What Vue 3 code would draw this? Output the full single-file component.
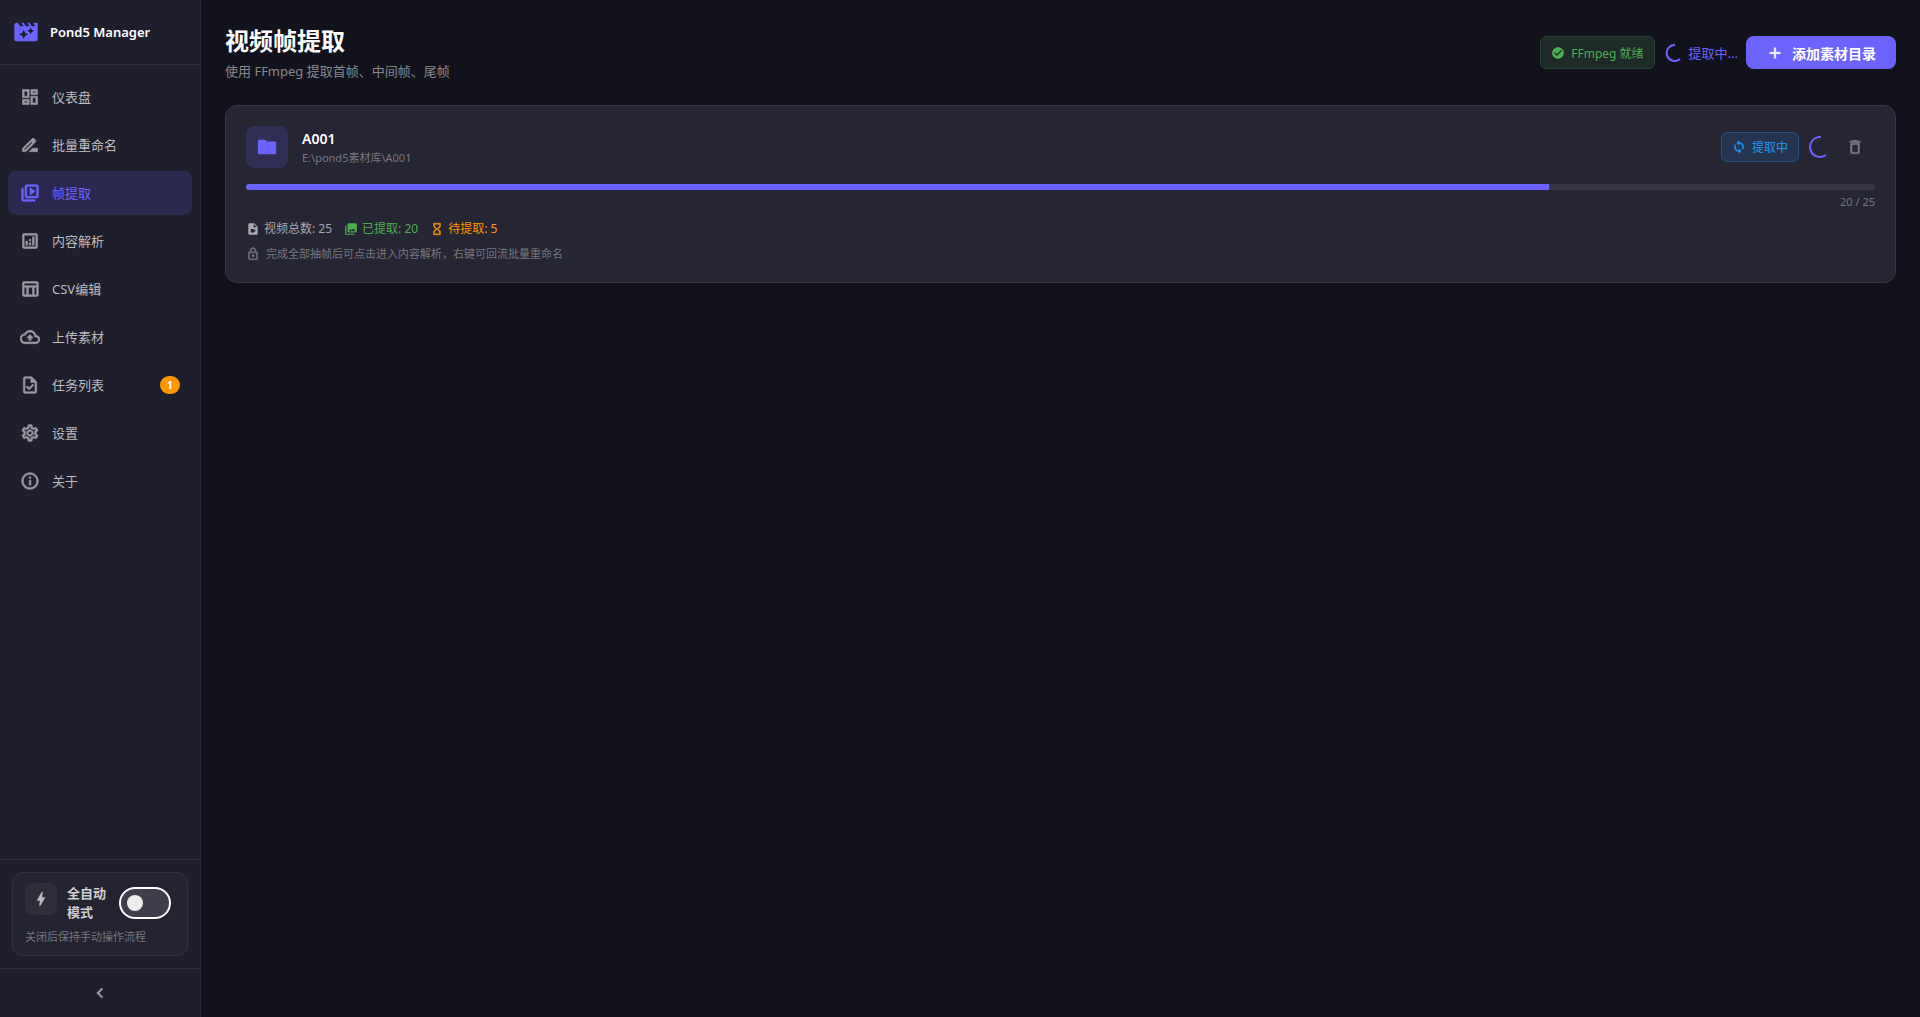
<script setup>
import { ref, computed } from 'vue'

const icons = {
  logo: 'M18 4l2 3h-3l-2-3h-2l2 3h-3l-2-3H8l2 3H7L5 4H4c-1.1 0-1.99.9-1.99 2L2 18c0 1.1.9 2 2 2h16c1.1 0 2-.9 2-2V4h-4zm-6.75 11.25L10 18l-1.25-2.75L6 14l2.75-1.25L10 10l1.25 2.75L14 14l-2.75 1.25zm5.69-3.31L16 14l-.94-2.06L13 11l2.06-.94L16 8l.94 2.06L19 11l-2.06.94z',
  bolt: 'M11 21h-1l1-7H7.5c-.58 0-.57-.32-.38-.66.19-.34.05-.08.07-.12C8.48 10.94 10.42 7.54 13 3h1l-1 7h3.5c.49 0 .56.33.47.51l-.07.15C12.96 17.55 11 21 11 21z',
  chevron: 'M15.41 7.41L14 6l-6 6 6 6 1.41-1.41L10.83 12z',
  check: 'M12 2C6.48 2 2 6.48 2 12s4.48 10 10 10 10-4.48 10-10S17.52 2 12 2zm-2 15l-5-5 1.41-1.41L10 14.17l7.59-7.59L19 8l-9 9z',
  add: 'M19 13h-6v6h-2v-6H5v-2h6V5h2v6h6v2z',
  sync: 'M12 4V1L8 5l4 4V6c3.31 0 6 2.69 6 6 0 1.01-.25 1.97-.7 2.8l1.46 1.46C19.54 15.03 20 13.57 20 12c0-4.42-3.58-8-8-8zm0 14c-3.31 0-6-2.69-6-6 0-1.01.25-1.97.7-2.8L5.24 7.74C4.46 8.97 4 10.43 4 12c0 4.42 3.58 8 8 8v3l4-4-4-4v3z',
  folder: 'M10 4H4c-1.1 0-1.99.9-1.99 2L2 18c0 1.1.9 2 2 2h16c1.1 0 2-.9 2-2V8c0-1.1-.9-2-2-2h-8l-2-2z',
  trash: 'M6 19c0 1.1.9 2 2 2h8c1.1 0 2-.9 2-2V7H6v12zM8 9h8v10H8V9zm7.5-5l-1-1h-5l-1 1H5v2h14V4z',
  video: 'M14 2H6.01c-1.1 0-2 .9-2 2L4 20c0 1.1.89 2 1.99 2H18c1.1 0 2-.9 2-2V8l-6-6zm-1 7V3.5L18.5 9H13zm1 5l2-1.06v4.12L14 16v1c0 .55-.45 1-1 1H9c-.55 0-1-.45-1-1v-4c0-.55.45-1 1-1h4c.55 0 1 .45 1 1v1z',
  photos: 'M22 16V4c0-1.1-.9-2-2-2H8c-1.1 0-2 .9-2 2v12c0 1.1.9 2 2 2h12c1.1 0 2-.9 2-2zm-11-4l2.03 2.71L16 11l4 5H8l3-4zM2 6v14c0 1.1.9 2 2 2h14v-2H4V6H2z',
  hourglass: 'M6 2v6h.01L6 8.01 10 12l-4 4 .01.01H6V22h12v-5.99h-.01L18 16l-4-4 4-3.99-.01-.01H18V2H6zm10 14.5V20H8v-3.5l4-4 4 4zm-4-5l-4-4V4h8v3.5l-4 4z',
  lock: 'M12 17c1.1 0 2-.9 2-2s-.9-2-2-2-2 .9-2 2 .9 2 2 2zm6-9h-1V6c0-2.76-2.24-5-5-5S7 3.24 7 6v2H6c-1.1 0-2 .9-2 2v10c0 1.1.9 2 2 2h12c1.1 0 2-.9 2-2V10c0-1.1-.9-2-2-2zM8.9 6c0-1.71 1.39-3.1 3.1-3.1s3.1 1.39 3.1 3.1v2H8.9V6zM18 20H6V10h12v10z'
}

const navItems = [
  { id: 'dashboard', label: '仪表盘', icon: 'M19 5v2h-4V5h4M9 5v6H5V5h4m10 8v6h-4v-6h4M9 17v2H5v-2h4M21 3h-8v6h8V3zM11 3H3v10h8V3zm10 8h-8v10h8V11zm-10 4H3v6h8v-6z' },
  { id: 'rename', label: '批量重命名', icon: 'M18.41 5.8L17.2 4.59c-.78-.78-2.05-.78-2.83 0l-2.68 2.68L3 15.96V20h4.04l8.74-8.74 2.63-2.63c.79-.78.79-2.05 0-2.83zM6.21 18H5v-1.21l8.66-8.66 1.21 1.21L6.21 18zM11 20l4-4h6v4H11z' },
  { id: 'frames', label: '帧提取', icon: 'M4 6H2v14c0 1.1.9 2 2 2h14v-2H4V6zm16-4H8c-1.1 0-2 .9-2 2v12c0 1.1.9 2 2 2h12c1.1 0 2-.9 2-2V4c0-1.1-.9-2-2-2zm0 14H8V4h12v12zM12 5.5v9l6-4.5z' },
  { id: 'analysis', label: '内容解析', icon: 'M19 3H5c-1.1 0-2 .9-2 2v14c0 1.1.9 2 2 2h14c1.1 0 2-.9 2-2V5c0-1.1-.9-2-2-2zm0 16H5V5h14v14zM7 12h2v5H7zM15 7h2v10h-2zM11 14h2v3h-2zM11 10h2v2h-2z' },
  { id: 'csv', label: 'CSV编辑', icon: 'M20 3H5c-1.1 0-2 .9-2 2v14c0 1.1.9 2 2 2h15c1.1 0 2-.9 2-2V5c0-1.1-.9-2-2-2zm0 2v3H5V5h15zm-5 14h-5v-9h5v9zM5 10h3v9H5v-9zm12 9v-9h3v9h-3z' },
  { id: 'upload', label: '上传素材', icon: 'M19.35 10.04C18.67 6.59 15.64 4 12 4 9.11 4 6.6 5.64 5.35 8.04 2.34 8.36 0 10.91 0 14c0 3.31 2.69 6 6 6h13c2.76 0 5-2.24 5-5 0-2.64-2.05-4.78-4.65-4.96zM19 18H6c-2.21 0-4-1.79-4-4 0-2.05 1.53-3.76 3.56-3.97l1.07-.11.5-.95C8.08 7.14 9.94 6 12 6c2.62 0 4.88 1.86 5.39 4.43l.3 1.5 1.53.11c1.56.1 2.78 1.41 2.78 2.96 0 1.65-1.35 3-3 3zM8 13h2.55v3h2.9v-3H16l-4-4z' },
  { id: 'tasks', label: '任务列表', badge: 1, icon: 'M14 2H6c-1.1 0-1.99.9-1.99 2L4 20c0 1.1.89 2 1.99 2H18c1.1 0 2-.9 2-2V8l-6-6zm4 18H6V4h7v5h5v11zM8.82 13.05L7.4 14.46 10.94 18l5.66-5.66-1.41-1.41-4.24 4.24z' },
  { id: 'settings', label: '设置', icon: 'M19.43 12.98c.04-.32.07-.64.07-.98 0-.34-.03-.66-.07-.98l2.11-1.65c.19-.15.24-.42.12-.64l-2-3.46c-.09-.16-.26-.25-.44-.25-.06 0-.12.01-.17.03l-2.49 1c-.52-.4-1.08-.73-1.69-.98l-.38-2.65C14.46 2.18 14.25 2 14 2h-4c-.25 0-.46.18-.49.42l-.38 2.65c-.61.25-1.17.59-1.69.98l-2.49-1c-.06-.02-.12-.03-.18-.03-.17 0-.34.09-.43.25l-2 3.46c-.13.22-.07.49.12.64l2.11 1.65c-.04.32-.07.65-.07.98 0 .33.03.66.07.98l-2.11 1.65c-.19.15-.24.42-.12.64l2 3.46c.09.16.26.25.44.25.06 0 .12-.01.17-.03l2.49-1c.52.4 1.08.73 1.69.98l.38 2.65c.03.24.24.42.49.42h4c.25 0 .46-.18.49-.42l.38-2.65c.61-.25 1.17-.59 1.69-.98l2.49 1c.06.02.12.03.18.03.17 0 .34-.09.43-.25l2-3.46c.12-.22.07-.49-.12-.64l-2.11-1.65zm-1.98-1.71c.04.31.05.52.05.73 0 .21-.02.43-.05.73l-.14 1.13.89.7 1.08.84-.7 1.21-1.27-.51-1.04-.42-.9.68c-.43.32-.84.56-1.25.73l-1.06.43-.16 1.13-.2 1.35h-1.4l-.19-1.35-.16-1.13-1.06-.43c-.43-.18-.83-.41-1.23-.71l-.91-.7-1.06.43-1.27.51-.7-1.21 1.08-.84.89-.7-.14-1.13c-.03-.31-.05-.54-.05-.74s.02-.43.05-.73l.14-1.13-.89-.7-1.08-.84.7-1.21 1.27.51 1.04.42.9-.68c.43-.32.84-.56 1.25-.73l1.06-.43.16-1.13.2-1.35h1.39l.19 1.35.16 1.13 1.06.43c.43.18.83.41 1.23.71l.91.7 1.06-.43 1.27-.51.7 1.21-1.07.85-.89.7.14 1.13zM12 8c-2.21 0-4 1.79-4 4s1.79 4 4 4 4-1.79 4-4-1.79-4-4-4zm0 6c-1.1 0-2-.9-2-2s.9-2 2-2 2 .9 2 2-.9 2-2 2z' },
  { id: 'about', label: '关于', icon: 'M11 7h2v2h-2zm0 4h2v6h-2zm1-9C6.48 2 2 6.48 2 12s4.48 10 10 10 10-4.48 10-10S17.52 2 12 2zm0 18c-4.41 0-8-3.59-8-8s3.59-8 8-8 8 3.59 8 8-3.59 8-8 8z' }
]

const active = ref('frames')
const autoMode = ref(false)
const folder = ref({ name: 'A001', path: 'E:\\pond5素材库\\A001', total: 25, done: 20 })
const pending = computed(() => folder.value.total - folder.value.done)
const percent = computed(() => (folder.value.done / folder.value.total) * 100)
</script>

<template>
  <div class="app">
    <aside class="sidebar">
      <div class="brand">
        <svg class="brand-logo" viewBox="0 0 24 24"><path :d="icons.logo" /></svg>
        <span>Pond5 Manager</span>
      </div>

      <nav class="nav">
        <a
          v-for="item in navItems"
          :key="item.id"
          :href="'#' + item.id"
          class="nav-item"
          :class="{ active: active === item.id }"
          @click.prevent="active = item.id"
        >
          <svg class="icon-20 heavy" viewBox="0 0 24 24"><path :d="item.icon" /></svg>
          <span class="nav-label">{{ item.label }}</span>
          <span v-if="item.badge" class="badge">{{ item.badge }}</span>
        </a>
      </nav>

      <div class="auto-wrap">
        <div class="auto-card">
          <div class="auto-row">
            <div class="auto-icon">
              <svg class="icon-18 heavy" viewBox="0 0 24 24"><path :d="icons.bolt" /></svg>
            </div>
            <label class="auto-title" for="auto-mode">全自动模式</label>
            <input id="auto-mode" v-model="autoMode" class="switch" type="checkbox" role="switch" />
          </div>
          <p class="auto-desc">关闭后保持手动操作流程</p>
        </div>
      </div>

      <button class="collapse" type="button" aria-label="收起">
        <svg class="icon-20 heavy" viewBox="0 0 24 24"><path :d="icons.chevron" /></svg>
      </button>
    </aside>

    <main class="main">
      <header class="page-header">
        <div>
          <h1 class="page-title">视频帧提取</h1>
          <p class="page-subtitle">使用 FFmpeg 提取首帧、中间帧、尾帧</p>
        </div>
        <div class="actions">
          <span class="chip chip-green">
            <svg class="icon-14" viewBox="0 0 24 24"><path :d="icons.check" /></svg>
            FFmpeg 就绪
          </span>
          <span class="working">
            <svg class="spinner-18" viewBox="0 0 18 18"><path d="M10 1A8 8 0 1 0 15 15" /></svg>
            提取中...
          </span>
          <button class="add-btn" type="button">
            <svg class="icon-18 heavy" viewBox="0 0 24 24"><path :d="icons.add" /></svg>
            添加素材目录
          </button>
        </div>
      </header>

      <section class="card">
        <div class="card-head">
          <div class="folder-icon">
            <svg class="icon-22" viewBox="0 0 24 24"><path :d="icons.folder" /></svg>
          </div>
          <div class="folder-info">
            <h2 class="folder-name">{{ folder.name }}</h2>
            <p class="folder-path">{{ folder.path }}</p>
          </div>
          <span class="chip chip-blue">
            <svg class="icon-14 heavy" viewBox="0 0 24 24"><path :d="icons.sync" /></svg>
            提取中
          </span>
          <svg class="spinner-22" viewBox="0 0 22 22"><path d="M12 1A10 10 0 1 0 17 19" /></svg>
          <button class="delete-btn" type="button" aria-label="删除">
            <svg class="icon-18 heavy" viewBox="0 0 24 24"><path :d="icons.trash" /></svg>
          </button>
        </div>

        <div class="progress">
          <div class="progress-fill" :style="{ width: percent + '%' }"></div>
        </div>
        <p class="progress-text">{{ folder.done }} / {{ folder.total }}</p>

        <div class="stats">
          <span class="stat">
            <svg class="icon-14" viewBox="0 0 24 24"><path :d="icons.video" /></svg>
            视频总数: {{ folder.total }}
          </span>
          <span class="stat stat-green">
            <svg class="icon-14" viewBox="0 0 24 24"><path :d="icons.photos" /></svg>
            已提取: {{ folder.done }}
          </span>
          <span class="stat stat-orange">
            <svg class="icon-14 heavy" viewBox="0 0 24 24"><path :d="icons.hourglass" /></svg>
            待提取: {{ pending }}
          </span>
        </div>
        <p class="hint">
          <svg class="icon-14 heavy" viewBox="0 0 24 24"><path :d="icons.lock" /></svg>
          完成全部抽帧后可点击进入内容解析，右键可回流批量重命名
        </p>
      </section>
    </main>
  </div>
</template>

<style>
body {
  margin: 0;
  background: #12121d;
}
</style>

<style scoped>
.app {
  display: flex;
  min-height: 100vh;
  background: #12121d;
  color: #fff;
  font-family: "Noto Sans", "Noto Sans CJK SC", sans-serif;
  font-size: 13px;
}

h1,
h2,
p {
  margin: 0;
}

button {
  border: none;
  background: none;
  padding: 0;
  font-family: inherit;
  cursor: pointer;
}

svg {
  flex: none;
  display: block;
  fill: currentColor;
}

/* thickens thin outline icons */
.heavy {
  stroke: currentColor;
  stroke-width: 0.7;
}

.icon-14 {
  width: 14px;
  height: 14px;
}

.icon-18 {
  width: 18px;
  height: 18px;
}

.icon-20 {
  width: 20px;
  height: 20px;
}

.icon-22 {
  width: 22px;
  height: 22px;
}

.spinner-18,
.spinner-22 {
  fill: none;
  stroke: #6c63ff;
  stroke-width: 2;
}

.spinner-18 {
  width: 18px;
  height: 18px;
}

.spinner-22 {
  width: 22px;
  height: 22px;
}

/* sidebar */
.sidebar {
  flex: none;
  display: flex;
  flex-direction: column;
  box-sizing: border-box;
  width: 201px;
  background: #1e1e2c;
  border-right: 1px solid #2a2a38;
}

.brand {
  display: flex;
  align-items: center;
  gap: 10px;
  height: 64px;
  padding: 0 12px;
  border-bottom: 1px solid #2f2f3d;
  font-weight: 600;
}

.brand-logo {
  width: 28px;
  height: 28px;
  fill: #6c63ff;
}

.nav {
  flex: 1;
  display: flex;
  flex-direction: column;
  gap: 4px;
  padding: 10px 8px;
}

.nav-item {
  display: flex;
  align-items: center;
  gap: 12px;
  height: 44px;
  padding: 0 12px;
  border-radius: 8px;
  color: #9a9aa2;
  text-decoration: none;
}

.nav-label {
  flex: 1;
  color: #bcbcc1;
  line-height: 18px;
}

.nav-item.active {
  background: #2c2950;
}

.nav-item.active,
.nav-item.active .nav-label {
  color: #6c63ff;
}

.badge {
  padding: 0 7px;
  border-radius: 9px;
  background: #ff9800;
  color: #fff;
  font-size: 11px;
  font-weight: 700;
  line-height: 18px;
}

.auto-wrap {
  padding: 12px;
  border-top: 1px solid #2f2f3d;
}

.auto-card {
  padding: 10px 12px;
  border: 1px solid #32323f;
  border-radius: 10px;
  background: #232331;
}

.auto-row {
  display: flex;
  align-items: center;
  height: 40px;
}

.auto-icon {
  display: flex;
  align-items: center;
  justify-content: center;
  align-self: flex-start;
  width: 32px;
  height: 32px;
  border-radius: 8px;
  background: #2e2e3b;
  color: #bcbcc1;
}

.auto-title {
  flex: 1;
  margin-left: 10px;
  color: #cfcfd3;
  font-weight: 600;
  line-height: 19px;
}

.switch {
  appearance: none;
  flex: none;
  display: flex;
  align-items: center;
  box-sizing: border-box;
  width: 52px;
  height: 32px;
  margin: 0 4px;
  padding: 0 6px;
  border: 2px solid #fff;
  border-radius: 16px;
  background: #3f3f4c;
  cursor: pointer;
}

.switch::before {
  content: "";
  width: 16px;
  height: 16px;
  border-radius: 50%;
  background: #ececec;
}

.switch:checked {
  justify-content: flex-end;
  background: #6c63ff;
}

.auto-desc {
  margin-top: 6px;
  color: #77777f;
  font-size: 11px;
  line-height: 16px;
}

.collapse {
  display: flex;
  align-items: center;
  justify-content: center;
  height: 49px;
  border-top: 1px solid #2f2f3d;
  color: #9a9aa2;
}

/* content */
.main {
  flex: 1;
  min-width: 0;
  padding: 24px;
}

.page-header {
  display: flex;
  align-items: center;
  justify-content: space-between;
  margin-bottom: 24px;
}

.page-title {
  font-size: 24px;
  font-weight: 600;
  line-height: 34px;
}

.page-subtitle {
  margin-top: 4px;
  color: #88888e;
  line-height: 19px;
}

.actions {
  display: flex;
  align-items: center;
}

.chip {
  display: flex;
  align-items: center;
  gap: 6px;
  box-sizing: border-box;
  border: 1px solid;
  border-radius: 6px;
  padding: 0 10px;
  font-size: 12px;
}

.chip-green {
  height: 33px;
  border-color: #23432f;
  background: #1d2a28;
  color: #4caf50;
}

.chip-blue {
  height: 30px;
  border-color: #225382;
  background: #25344f;
  color: #2196f3;
}

.working {
  display: flex;
  align-items: center;
  gap: 6px;
  margin: 0 8px 0 10px;
  color: #6c63ff;
}

.add-btn {
  display: flex;
  align-items: center;
  gap: 8px;
  height: 33px;
  padding: 0 20px;
  border-radius: 8px;
  background: #6c63ff;
  color: #fff;
  font-size: 14px;
  font-weight: 600;
}

.card {
  padding: 20px;
  border: 1px solid #353543;
  border-radius: 12px;
  background: #252534;
}

.card-head {
  display: flex;
  align-items: center;
}

.folder-icon {
  display: flex;
  align-items: center;
  justify-content: center;
  width: 42px;
  height: 42px;
  border-radius: 8px;
  background: #302e54;
  color: #6c63ff;
}

.folder-info {
  flex: 1;
  margin-left: 14px;
}

.folder-name {
  font-size: 14px;
  font-weight: 600;
  line-height: 22px;
}

.folder-path {
  color: #77777f;
  font-size: 11px;
  line-height: 16px;
}

.spinner-22 {
  margin: 0 4px 0 10px;
}

.delete-btn {
  padding: 6px 11px;
  color: #77777f;
}

.progress {
  height: 6px;
  margin-top: 16px;
  border-radius: 3px;
  background: #373644;
  overflow: hidden;
}

.progress-fill {
  height: 100%;
  background: #6c63ff;
}

.progress-text {
  margin-top: 4px;
  color: #77777f;
  font-size: 11px;
  line-height: 16px;
  text-align: right;
}

.stats {
  display: flex;
  gap: 12px;
  margin-top: 9px;
  font-size: 12px;
  line-height: 20px;
}

.stat {
  display: flex;
  align-items: center;
  gap: 4px;
  color: #a8a8ae;
}

.stat-green {
  color: #4caf50;
}

.stat-orange {
  color: #ff9800;
}

.hint {
  display: flex;
  align-items: center;
  gap: 6px;
  margin-top: 7px;
  color: #77777f;
  font-size: 11px;
  line-height: 16px;
}
</style>
